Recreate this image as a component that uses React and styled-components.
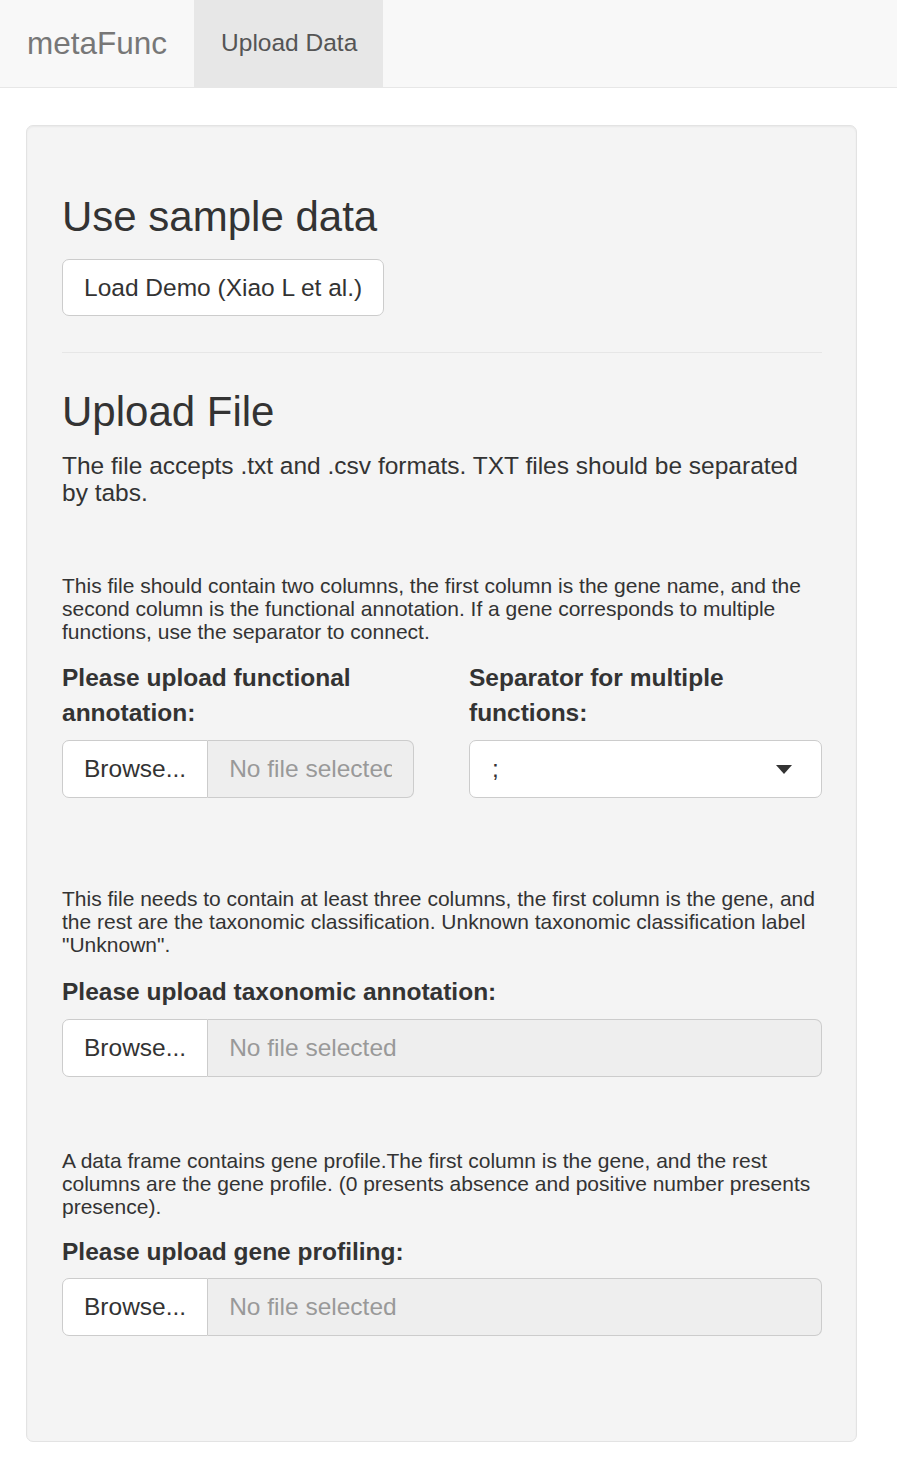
import React from 'react'
import styled, { createGlobalStyle } from 'styled-components'

const Global = createGlobalStyle`
  body {
    margin: 0;
    background: #fff;
    color: #333;
    font-family: "Liberation Sans", Arial, Helvetica, sans-serif;
  }
  * { box-sizing: border-box; }
`

const Navbar = styled.nav`
  display: flex;
  height: 88px;
  background: #f8f8f8;
  border-bottom: 1px solid #e7e7e7;
`
const Brand = styled.div`
  display: flex;
  align-items: center;
  padding: 0 27px 0 27px;
  font-size: 31.5px;
  color: #777;
`
const NavTab = styled.div`
  display: flex;
  align-items: center;
  padding: 0 26px 2px 27px;
  font-size: 24.5px;
  color: #555;
  background: ${p => (p.$active ? '#e7e7e7' : 'transparent')};
`

const Well = styled.div`
  margin: 37px 40px 26px 26px;
  padding: 34px 34px 105px 35px;
  background: #f4f4f4;
  border: 1px solid #e3e3e3;
  border-radius: 7px;
  box-shadow: inset 0 1px 2px rgba(0, 0, 0, 0.05);
  display: flex;
  flex-direction: column;
`

const Heading = styled.h3`
  margin: ${p => p.$top}px 0 0;
  font-size: 42px;
  font-weight: 500;
  line-height: 46px;
`
const Lead = styled.h5`
  margin: ${p => p.$top}px 0 0;
  font-size: 24.5px;
  font-weight: 500;
  line-height: 27px;
`
const Note = styled.h6`
  margin: ${p => p.$top}px 0 0;
  font-size: 21px;
  font-weight: 500;
  line-height: 23.1px;
`
const Rule = styled.hr`
  margin: 36px 0 0;
  border: 0;
  border-top: 1px solid #e6e6e6;
  height: 0;
`

const Button = styled.button`
  align-self: flex-start;
  margin-top: ${p => p.$top}px;
  height: 57px;
  padding: 0 21px;
  font-family: inherit;
  font-size: 24.5px;
  color: #333;
  background: #fff;
  border: 1px solid #ccc;
  border-radius: 7px;
`

const Row = styled.div`
  margin-top: ${p => p.$top}px;
  display: grid;
  grid-template-columns: 352px 353px;
  column-gap: 55px;
`
const Field = styled.div`
  margin-top: ${p => p.$top || 0}px;
  display: flex;
  flex-direction: column;
`
const Label = styled.label`
  font-size: 24.5px;
  font-weight: 700;
  line-height: 35px;
  margin-bottom: 9.5px;
`

const InputGroup = styled.div`
  display: flex;
  height: 58px;
`
const BrowseBtn = styled.span`
  display: flex;
  align-items: center;
  padding: 0 21px;
  font-size: 24.5px;
  color: #333;
  background: #fff;
  border: 1px solid #ccc;
  border-radius: 7px 0 0 7px;
`
const FileName = styled.input`
  flex: 1;
  min-width: 0;
  padding: 0 21px;
  font-family: inherit;
  font-size: 24.5px;
  color: #555;
  background: #eee;
  border: 1px solid #ccc;
  border-left: 0;
  border-radius: 0 7px 7px 0;
  outline: none;
  &::placeholder { color: #999; opacity: 1; }
`

const Select = styled.div`
  position: relative;
  height: 58px;
  display: flex;
  align-items: center;
  padding: 0 22px;
  font-size: 24.5px;
  color: #333;
  background: #fff;
  border: 1px solid #ccc;
  border-radius: 7px;
`
const Caret = styled.span`
  position: absolute;
  right: 29px;
  top: 24px;
  width: 0;
  height: 0;
  border-style: solid;
  border-width: 9px 8.5px 0;
  border-color: #333 transparent transparent;
`

const FileInput = ({ label }) => (
  <Field>
    <Label>{label}</Label>
    <InputGroup>
      <BrowseBtn>Browse...</BrowseBtn>
      <FileName readOnly placeholder="No file selected" />
    </InputGroup>
  </Field>
)

export default function App() {
  return (
    <>
      <Global />
      <Navbar>
        <Brand>metaFunc</Brand>
        <NavTab $active>Upload Data</NavTab>
      </Navbar>
      <Well>
        <Heading $top={34}>Use sample data</Heading>
        <Button $top={19}>Load Demo (Xiao L et al.)</Button>
        <Rule />
        <Heading $top={36}>Upload File</Heading>
        <Lead $top={17}>
          The file accepts .txt and .csv formats. TXT files should be separated by tabs.
        </Lead>

        <Note $top={68}>
          This file should contain two columns, the first column is the gene name, and the
          second column is the functional annotation. If a gene corresponds to multiple
          functions, use the separator to connect.
        </Note>
        <Row $top={17}>
          <FileInput label="Please upload functional annotation:" />
          <Field>
            <Label>Separator for multiple functions:</Label>
            <Select>
              ;
              <Caret />
            </Select>
          </Field>
        </Row>

        <Note $top={89}>
          This file needs to contain at least three columns, the first column is the gene, and
          the rest are the taxonomic classification. Unknown taxonomic classification label
          "Unknown".
        </Note>
        <Field $top={18}>
          <FileInput label="Please upload taxonomic annotation:" />
        </Field>

        <Note $top={72}>
          A data frame contains gene profile.The first column is the gene, and the rest
          columns are the gene profile. (0 presents absence and positive number presents
          presence).
        </Note>
        <Field $top={16}>
          <FileInput label="Please upload gene profiling:" />
        </Field>
      </Well>
    </>
  )
}
